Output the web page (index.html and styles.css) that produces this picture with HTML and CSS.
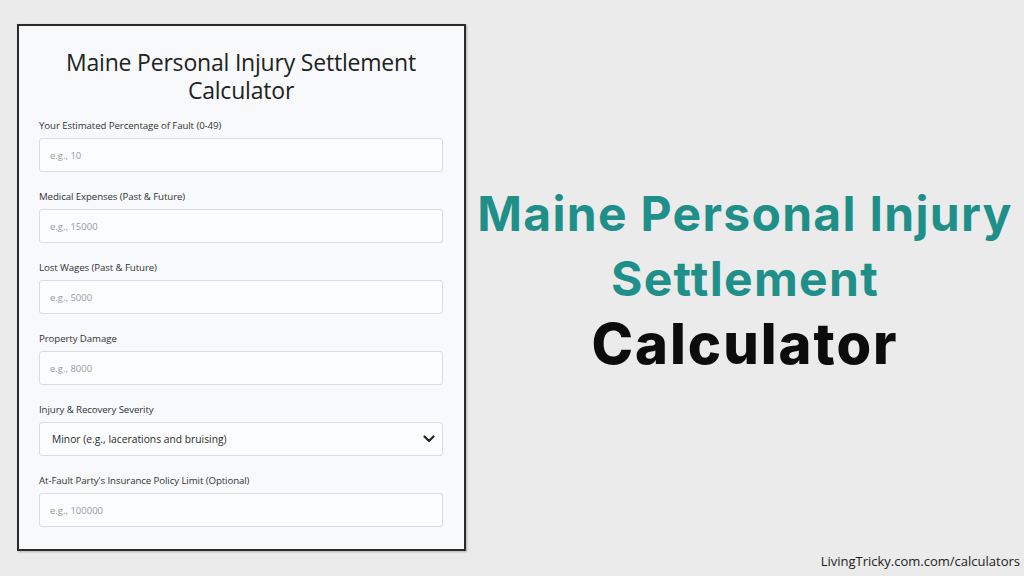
FILE: index.html
```html
<!DOCTYPE html>
<html lang="en">
<head>
<meta charset="utf-8">
<title>Maine Personal Injury Settlement Calculator</title>
<link rel="stylesheet" href="styles.css">
</head>
<body>
<main class="page">
  <section class="card">
    <h1 class="card-title">Maine Personal Injury Settlement Calculator</h1>
    <div class="field">
      <label class="label">Your Estimated Percentage of Fault (0-49)</label>
      <div class="input"><span class="ph">e.g., 10</span></div>
    </div>
    <div class="field">
      <label class="label">Medical Expenses (Past &amp; Future)</label>
      <div class="input"><span class="ph">e.g., 15000</span></div>
    </div>
    <div class="field">
      <label class="label">Lost Wages (Past &amp; Future)</label>
      <div class="input"><span class="ph">e.g., 5000</span></div>
    </div>
    <div class="field">
      <label class="label">Property Damage</label>
      <div class="input"><span class="ph">e.g., 8000</span></div>
    </div>
    <div class="field">
      <label class="label">Injury &amp; Recovery Severity</label>
      <div class="input select"><span class="val">Minor (e.g., lacerations and bruising)</span>
        <svg class="chev" width="12" height="8" viewBox="0 0 12 8"><path d="M1.5 1.5 L6 6 L10.5 1.5" fill="none" stroke="#222" stroke-width="2.2" stroke-linecap="round" stroke-linejoin="round"/></svg>
      </div>
    </div>
    <div class="field">
      <label class="label">At-Fault Party's Insurance Policy Limit (Optional)</label>
      <div class="input"><span class="ph">e.g., 100000</span></div>
    </div>
  </section>
  <section class="hero">
    <h2 class="hero-title"><span class="teal">Maine Personal Injury<br>Settlement</span><br><span class="black">Calculator</span></h2>
  </section>
</main>
<footer class="credit">LivingTricky.com.com/calculators</footer>
</body>
</html>
```
FILE: styles.css
```css
* { box-sizing: border-box; }
html, body { margin: 0; padding: 0; }
body {
  width: 1024px;
  height: 576px;
  background: #ebebeb;
  font-family: "Open Sans", "Noto Sans", sans-serif;
  overflow: hidden;
  position: relative;
}
.page {
  display: flex;
  align-items: flex-start;
  padding: 24px 0 0 17px;
}
.card {
  width: 449px;
  height: 527px;
  background: #f8f9fa;
  border: 2px solid #2b2b2b;
  box-shadow: 1px 1px 2px rgba(0,0,0,0.25);
  padding: 22px 21px 0 20px;
  flex: none;
}
.card-title {
  margin: 0 0 15px;
  text-align: center;
  font-size: 23px;
  line-height: 28px;
  font-weight: 500;
  color: #222;
  letter-spacing: -0.2px;
}
.field { margin-bottom: 18px; }
.field:last-child { margin-bottom: 0; }
.label {
  display: block;
  font-size: 9.7px;
  line-height: 14px;
  color: #333;
  margin-bottom: 5px;
  letter-spacing: -0.1px;
}
.input {
  height: 34px;
  border: 1px solid #dcdcdc;
  border-radius: 3px;
  background: #fbfcfd;
  display: flex;
  align-items: center;
  padding: 0 10px;
}
.ph {
  font-size: 9.5px;
  color: #9a9a9a;
}
.select { justify-content: space-between; padding: 0 7px 0 12px; }
.val { font-size: 10.3px; color: #2a2a2a; }
.hero {
  flex: 1;
  display: flex;
  justify-content: center;
  padding-top: 157px;
}
.hero-title {
  margin: 0;
  text-align: center;
  font-family: "Inter", sans-serif;
}
.teal {
  color: #1f8f89;
  font-size: 48px;
  line-height: 65px;
  font-weight: 700;
  letter-spacing: 1.3px;
}
.black {
  color: #0c0c0c;
  font-size: 56px;
  line-height: 66px;
  font-weight: 800;
  letter-spacing: 2px;
}
.credit {
  position: absolute;
  right: 4px;
  bottom: 6px;
  font-size: 13px;
  color: #222;
  font-family: "Open Sans", sans-serif;
}
```
